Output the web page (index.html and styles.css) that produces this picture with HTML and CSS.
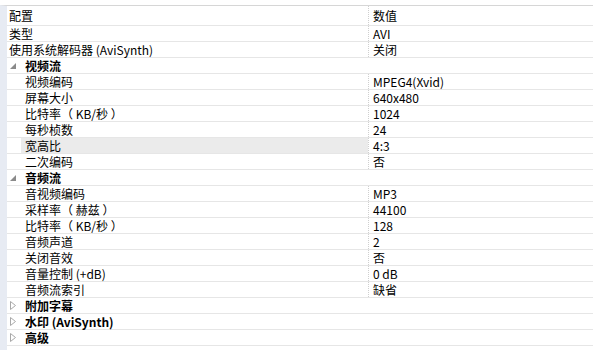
FILE: index.html
```html
<!DOCTYPE html>
<html lang="zh-CN">
  <head>
    <meta charset="UTF-8" />
    <title>属性</title>
    <link rel="stylesheet" href="styles.css">
  </head>
  <body>
    <div class="grid">
      <div class="row head"><div class="name">配置</div><div class="value">数值</div></div>
      <div class="row"><div class="name">类型</div><div class="value">AVI</div></div>
      <div class="row"><div class="name">使用系统解码器 (AviSynth)</div><div class="value">关闭</div></div>

      <div class="row cat">
        <svg class="tog" width="6" height="6" viewBox="0 0 6 6"><polygon points="6,0 6,6 0,6" fill="#8a8a8a"/></svg>
        <span>视频流</span>
      </div>
      <div class="row sub"><div class="name">视频编码</div><div class="value">MPEG4(Xvid)</div></div>
      <div class="row sub"><div class="name">屏幕大小</div><div class="value">640x480</div></div>
      <div class="row sub"><div class="name">比特率（ KB/秒 ）</div><div class="value">1024</div></div>
      <div class="row sub"><div class="name">每秒桢数</div><div class="value">24</div></div>
      <div class="row sub selected"><div class="name">宽高比</div><div class="value">4:3</div></div>
      <div class="row sub"><div class="name">二次编码</div><div class="value">否</div></div>

      <div class="row cat">
        <svg class="tog" width="6" height="6" viewBox="0 0 6 6"><polygon points="6,0 6,6 0,6" fill="#8a8a8a"/></svg>
        <span>音频流</span>
      </div>
      <div class="row sub"><div class="name">音视频编码</div><div class="value">MP3</div></div>
      <div class="row sub"><div class="name">采样率（ 赫兹 ）</div><div class="value">44100</div></div>
      <div class="row sub"><div class="name">比特率（ KB/秒 ）</div><div class="value">128</div></div>
      <div class="row sub"><div class="name">音频声道</div><div class="value">2</div></div>
      <div class="row sub"><div class="name">关闭音效</div><div class="value">否</div></div>
      <div class="row sub"><div class="name">音量控制 (+dB)</div><div class="value">0 dB</div></div>
      <div class="row sub"><div class="name">音频流索引</div><div class="value">缺省</div></div>

      <div class="row cat">
        <svg class="tog" width="6" height="9" viewBox="0 0 6 9"><polygon points="0.5,0.5 5.5,4.5 0.5,8.5" fill="none" stroke="#a8a8a8"/></svg>
        <span>附加字幕</span>
      </div>
      <div class="row cat">
        <svg class="tog" width="6" height="9" viewBox="0 0 6 9"><polygon points="0.5,0.5 5.5,4.5 0.5,8.5" fill="none" stroke="#a8a8a8"/></svg>
        <span>水印 (AviSynth)</span>
      </div>
      <div class="row cat">
        <svg class="tog" width="6" height="9" viewBox="0 0 6 9"><polygon points="0.5,0.5 5.5,4.5 0.5,8.5" fill="none" stroke="#a8a8a8"/></svg>
        <span>高级</span>
      </div>
    </div>
  </body>
</html>
```

FILE: styles.css
```css
body {
  margin: 0;
  background-color: #fff;
  font-family: "Noto Sans CJK SC", "Liberation Sans", sans-serif;
  font-size: 12px;
  color: #000;
}

.grid {
  margin-top: 5px;
  border-top: 1px solid #d6d6d6;
  border-left: 7px solid #e7ebf3;
  height: 344px;
}

.row {
  display: flex;
  height: 15px;
  line-height: 15px;
  border-bottom: 1px solid #e6e6e6;
  white-space: nowrap;
}

.row.head {
  height: 19px;
  line-height: 19px;
}

.name {
  width: 359px;
  padding-left: 2px;
}

.value {
  flex: 1;
  padding-left: 4px;
  border-left: 1px dotted #cfcfcf;
}

.sub .name {
  width: 343px;
  margin-left: 14px;
  padding-left: 4px;
}

.selected .name {
  background-color: #ebebeb;
}

.cat {
  align-items: center;
  font-weight: bold;
}

.tog {
  margin-left: 3px;
  width: 15px;
  flex: none;
  display: block;
}

.cat svg.tog {
  width: 6px;
  margin-right: 9px;
}
```
